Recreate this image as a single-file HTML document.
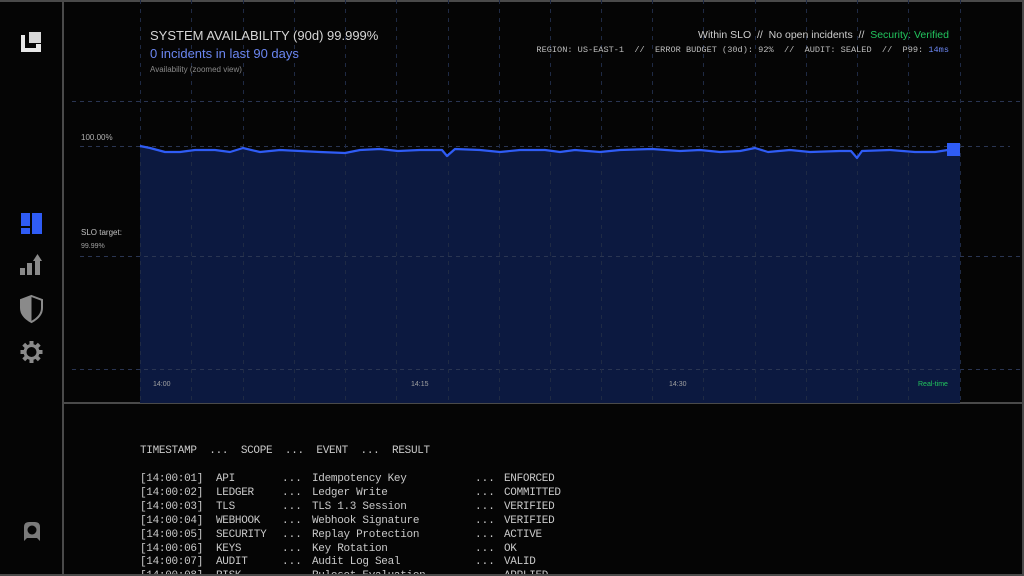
<!DOCTYPE html>
<html><head><meta charset="utf-8"><style>
*{margin:0;padding:0;box-sizing:border-box}
html,body{width:1024px;height:576px;overflow:hidden}
body{background:#050505;position:relative;font-family:"Liberation Sans",sans-serif}
.a{position:absolute;white-space:pre}
.m{font-family:"Liberation Mono",monospace;font-size:10.5px;color:#c9c9c9}
</style></head><body>
<div class="a" style="left:0;top:0;width:1024px;height:2px;background:#4a4a4a"></div>
<div class="a" style="left:62px;top:0;width:2px;height:576px;background:#4a4a4a"></div>
<div class="a" style="left:1022px;top:0;width:2px;height:576px;background:#4a4a4a"></div>
<div class="a" style="left:63px;top:402px;width:961px;height:2px;background:#4a4a4a"></div>

<svg class="a" style="left:0;top:0" width="1024" height="576">
  <path d="M140,146 L150,148 L165,152 L180,152 L195,150 L215,150 L230,152 L243,148 L260,152 L280,150 L300,151 L320,152 L345,153 L360,150 L380,149 L398,151 L420,150 L442,150 L447,156 L455,149 L480,150 L500,152 L520,150 L545,150 L560,152 L575,150 L600,152 L620,150 L652,149 L680,151 L700,150 L720,152 L740,151 L755,148 L768,152 L790,150 L810,152 L840,151 L851,151 L857,158 L862,151 L890,150 L915,152 L935,152 L954,149 L960,149 L960,403 L140,403 Z" fill="#0c1940"/>
  <g stroke="#2a3552" stroke-width="1" stroke-dasharray="4,4">
    <line x1="72" y1="101.5" x2="1024" y2="101.5"/>
    <line x1="80" y1="146.5" x2="1010" y2="146.5"/>
    <line x1="80" y1="256.5" x2="1024" y2="256.5"/>
    <line x1="72" y1="369.5" x2="1024" y2="369.5"/>
  </g>
  <g stroke="#1f2a44" stroke-width="1" stroke-dasharray="4,5">
    <line x1="140.5" y1="0" x2="140.5" y2="403"/><line x1="191.5" y1="0" x2="191.5" y2="403"/>
    <line x1="243.5" y1="0" x2="243.5" y2="403"/><line x1="294.5" y1="0" x2="294.5" y2="403"/>
    <line x1="345.5" y1="0" x2="345.5" y2="403"/><line x1="396.5" y1="0" x2="396.5" y2="403"/>
    <line x1="448.5" y1="0" x2="448.5" y2="403"/><line x1="499.5" y1="0" x2="499.5" y2="403"/>
    <line x1="550.5" y1="0" x2="550.5" y2="403"/><line x1="601.5" y1="0" x2="601.5" y2="403"/>
    <line x1="652.5" y1="0" x2="652.5" y2="403"/><line x1="703.5" y1="0" x2="703.5" y2="403"/>
    <line x1="755.5" y1="0" x2="755.5" y2="403"/><line x1="806.5" y1="0" x2="806.5" y2="403"/>
    <line x1="857.5" y1="0" x2="857.5" y2="403"/><line x1="908.5" y1="0" x2="908.5" y2="403"/>
    <line x1="960.5" y1="0" x2="960.5" y2="403"/>
  </g>
  <path d="M140,146 L150,148 L165,152 L180,152 L195,150 L215,150 L230,152 L243,148 L260,152 L280,150 L300,151 L320,152 L345,153 L360,150 L380,149 L398,151 L420,150 L442,150 L447,156 L455,149 L480,150 L500,152 L520,150 L545,150 L560,152 L575,150 L600,152 L620,150 L652,149 L680,151 L700,150 L720,152 L740,151 L755,148 L768,152 L790,150 L810,152 L840,151 L851,151 L857,158 L862,151 L890,150 L915,152 L935,152 L954,149" fill="none" stroke="#2f5cf5" stroke-width="2.2" stroke-linejoin="round"/>
  <rect x="947" y="143" width="13" height="13" fill="#2f5cf5"/>
  <!-- logo -->
  <path d="M21,35 h4 v13 h11 v-4 h5 v8 h-20 z" fill="#e8e8e8"/>
  <rect x="29" y="32" width="12" height="11" fill="#d8d8d8"/>
  <!-- dashboard icon -->
  <rect x="21" y="213" width="9" height="13" fill="#2f5cf5"/>
  <rect x="21" y="228" width="9" height="6" fill="#2f5cf5"/>
  <rect x="32" y="213" width="10" height="21" fill="#2f5cf5"/>
  <g fill="#8a8a8a">
    <rect x="20" y="268" width="5" height="7"/>
    <rect x="27" y="263" width="5" height="12"/>
    <rect x="35" y="260" width="5" height="15"/>
    <path d="M33,261 L37.5,254 L42,261 Z"/>
  </g>
  <path d="M31.5,296 L42,300 V308 C42,315 37,319 31.5,322 C26,319 21,315 21,308 V300 Z" fill="none" stroke="#8a8a8a" stroke-width="2"/>
  <path d="M31.5,296 L21,300 V308 C21,315 26,319 31.5,322 Z" fill="#8a8a8a"/>
  <g transform="translate(31.5,352)" fill="#8a8a8a">
    <circle r="8"/>
    <rect x="-2" y="-11" width="4" height="22"/><rect x="-2" y="-11" width="4" height="22" transform="rotate(45)"/><rect x="-2" y="-11" width="4" height="22" transform="rotate(90)"/><rect x="-2" y="-11" width="4" height="22" transform="rotate(135)"/>
    <circle r="5" fill="#050505"/>
  </g>
  <path d="M24,527 Q24,522 29,522 H35 Q40,522 40,527 V541 L37,538 H27 L24,541 Z" fill="#7a7a7a"/>
  <circle cx="32" cy="530" r="4.5" fill="#050505"/>
  <rect x="0" y="574" width="1024" height="2" fill="#4a4a4a"/>
</svg>

<div class="a" style="left:150px;top:28px;font-size:13px;color:#d6d6d6">SYSTEM AVAILABILITY (90d) 99.999%</div>
<div class="a" style="left:150px;top:46px;font-size:13px;color:#6b86f0">0 incidents in last 90 days</div>
<div class="a" style="left:150px;top:65px;font-size:8px;color:#8a8a8a">Availability (zoomed view)</div>
<div class="a" style="right:75px;top:29px;font-size:10.5px;color:#cfcfcf">Within SLO  //  No open incidents  //  <span style="color:#22c55e">Security: Verified</span></div>
<div class="a m" style="right:75px;top:45px;font-size:8.6px;color:#bdbdbd">REGION: US-EAST-1  //  ERROR BUDGET (30d): 92%  //  AUDIT: SEALED  //  P99: <span style="color:#6b86f0">14ms</span></div>

<div class="a" style="left:81px;top:133px;font-size:8px;color:#b0b0b0">100.00%</div>
<div class="a" style="left:81px;top:228px;font-size:8px;color:#c0c0c0">SLO target:</div>
<div class="a" style="left:81px;top:243px;font-size:7px;color:#a0a0a0">99.99%</div>
<div class="a" style="left:153px;top:381px;font-size:7px;color:#a0a0a0">14:00</div>
<div class="a" style="left:411px;top:381px;font-size:7px;color:#a0a0a0">14:15</div>
<div class="a" style="left:669px;top:381px;font-size:7px;color:#a0a0a0">14:30</div>
<div class="a" style="left:918px;top:381px;font-size:7px;color:#22c55e">Real-time</div>

<div class="a m" style="left:140px;top:445px;font-size:11px;letter-spacing:-0.3px">TIMESTAMP  ...  SCOPE  ...  EVENT  ...  RESULT</div>
<div class="a m" style="left:140px;top:473px;line-height:13.9px;font-size:11px;letter-spacing:-0.3px">[14:00:01]
[14:00:02]
[14:00:03]
[14:00:04]
[14:00:05]
[14:00:06]
[14:00:07]
[14:00:08]</div>
<div class="a m" style="left:216px;top:473px;line-height:13.9px;font-size:11px;letter-spacing:-0.3px">API
LEDGER
TLS
WEBHOOK
SECURITY
KEYS
AUDIT
RISK</div>
<div class="a m" style="left:282px;top:473px;line-height:13.9px;font-size:11px">...
...
...
...
...
...
...
...</div>
<div class="a m" style="left:312px;top:473px;line-height:13.9px;font-size:11px;letter-spacing:-0.3px">Idempotency Key
Ledger Write
TLS 1.3 Session
Webhook Signature
Replay Protection
Key Rotation
Audit Log Seal
Ruleset Evaluation</div>
<div class="a m" style="left:475px;top:473px;line-height:13.9px;font-size:11px">...
...
...
...
...
...
...
...</div>
<div class="a m" style="left:504px;top:473px;line-height:13.9px;font-size:11px;letter-spacing:-0.3px">ENFORCED
COMMITTED
VERIFIED
VERIFIED
ACTIVE
OK
VALID
APPLIED</div>
<div class="a" style="left:0;top:574px;width:1024px;height:2px;background:#4a4a4a"></div>
</body></html>
